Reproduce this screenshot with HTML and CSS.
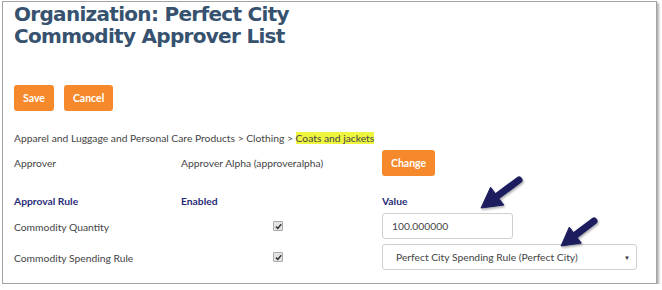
FILE: index.html
```html
<!DOCTYPE html>
<html lang="en">
<head>
  <meta charset="UTF-8" />
  <title>Commodity Approver List</title>
  <link rel="stylesheet" href="styles.css">
</head>
<body>
<div class="frame">
  <h1>Organization: Perfect City<br>Commodity Approver List</h1>

  <div class="actions">
    <button class="btn">Save</button>
    <button class="btn">Cancel</button>
  </div>

  <p class="crumb">Apparel and Luggage and Personal Care Products &gt; Clothing &gt; <mark>Coats and jackets</mark></p>

  <div class="row approver">
    <span class="col1">Approver</span>
    <span class="col2">Approver Alpha (approveralpha)</span>
    <span class="col3"><button class="btn">Change</button></span>
  </div>

  <div class="row head">
    <span class="col1">Approval Rule</span>
    <span class="col2">Enabled</span>
    <span class="col3">Value</span>
  </div>

  <div class="row rule qty">
    <span class="col1">Commodity Quantity</span>
    <span class="col2"><span class="check"><svg width="7" height="7" viewBox="0 0 7 7"><path d="M1 3.6 L2.8 5.4 L6.2 1.2" fill="none" stroke="#333" stroke-width="1.5"/></svg></span></span>
    <span class="col3"><input class="field value" type="text" value="100.000000"></span>
  </div>

  <div class="row rule spend">
    <span class="col1">Commodity Spending Rule</span>
    <span class="col2"><span class="check"><svg width="7" height="7" viewBox="0 0 7 7"><path d="M1 3.6 L2.8 5.4 L6.2 1.2" fill="none" stroke="#333" stroke-width="1.5"/></svg></span></span>
    <span class="col3">
      <span class="select field">Perfect City Spending Rule (Perfect City)<span class="caret">&#9660;</span></span>
    </span>
  </div>
</div>

<!-- callout arrows drawn over the screenshot -->
<svg class="arrows" width="662" height="290" viewBox="0 0 662 290">
  <defs>
    <filter id="shadow" x="-20%" y="-20%" width="140%" height="140%">
      <feDropShadow dx="1" dy="1.5" stdDeviation="1.2" flood-color="#000" flood-opacity="0.35"/>
    </filter>
  </defs>
  <g fill="#1b1f5e" stroke="#1b1f5e" filter="url(#shadow)">
    <line x1="519" y1="180" x2="498" y2="195.5" stroke-width="7" stroke-linecap="round"/>
    <polygon points="481,208 503.8,205 490.6,187.2" stroke-width="1" stroke-linejoin="round"/>
    <line x1="594" y1="221" x2="576" y2="234.6" stroke-width="7" stroke-linecap="round"/>
    <polygon points="561,246 581.3,243.1 569.3,227.1" stroke-width="1" stroke-linejoin="round"/>
  </g>
</svg>
</body>
</html>
```

FILE: styles.css
```css
body {
  margin: 0;
  background: #fff;
  font-family: Lato, 'Open Sans', sans-serif;
  font-size: 10.3px;
  color: #444;
  position: relative;
}
.frame {
  width: 642px;
  height: 281px;
  margin: 1px 0 0 2px;
  padding: 0 0 0 11px;
  border: 1px solid #a3a3a3;
  box-shadow: 2px 2px 2px rgba(0,0,0,0.3);
  background: #fff;
}
h1 {
  margin: 1px 0 0;
  font-family: 'DejaVu Sans', Verdana, sans-serif;
  font-weight: bold;
  font-size: 20px;
  letter-spacing: -0.7px;
  line-height: 22px;
  color: #36526f;
}
.actions {
  display: flex;
  gap: 10px;
  margin-top: 38px;
}
.btn {
  height: 26px;
  padding: 0 9px;
  border: none;
  border-radius: 3px;
  background: #f6892b;
  color: #fff;
  font-family: Lato, sans-serif;
  font-size: 10.5px;
  font-weight: bold;
}
.crumb {
  margin: 19px 0 0;
  line-height: 16px;
}
mark {
  background: #eef53f;
  color: #444;
}
.row {
  display: flex;
  align-items: center;
}
.col1 { width: 167px; }
.col2 { width: 201px; }
.approver {
  margin-top: 4px;
  height: 26px;
}
.head {
  margin-top: 17px;
  height: 16px;
  font-weight: bold;
  color: #2a2c78;
}
.rule { height: 26px; }
.qty { margin-top: 4px; }
.spend { margin-top: 5px; }
.rule .col1 { padding-top: 1px; }
.check {
  display: flex;
  align-items: center;
  justify-content: center;
  width: 8px;
  height: 8px;
  margin-left: 92px;
  border: 1px solid #aaa;
  border-radius: 1px;
  background: #e4e4e4;
}
.field {
  box-sizing: border-box;
  height: 26px;
  border: 1px solid #cfcfcf;
  border-radius: 3px;
  background: #fff;
  font-family: Lato, sans-serif;
  font-size: 10.3px;
  color: #444;
}
.value {
  width: 131px;
  padding: 0 9px;
}
.select {
  display: flex;
  align-items: center;
  width: 255px;
  padding: 0 0 0 13px;
}
.caret {
  margin-left: auto;
  margin-right: 6px;
  font-size: 6px;
  color: #333;
}
.arrows {
  position: absolute;
  left: 0;
  top: 0;
  pointer-events: none;
}
```
